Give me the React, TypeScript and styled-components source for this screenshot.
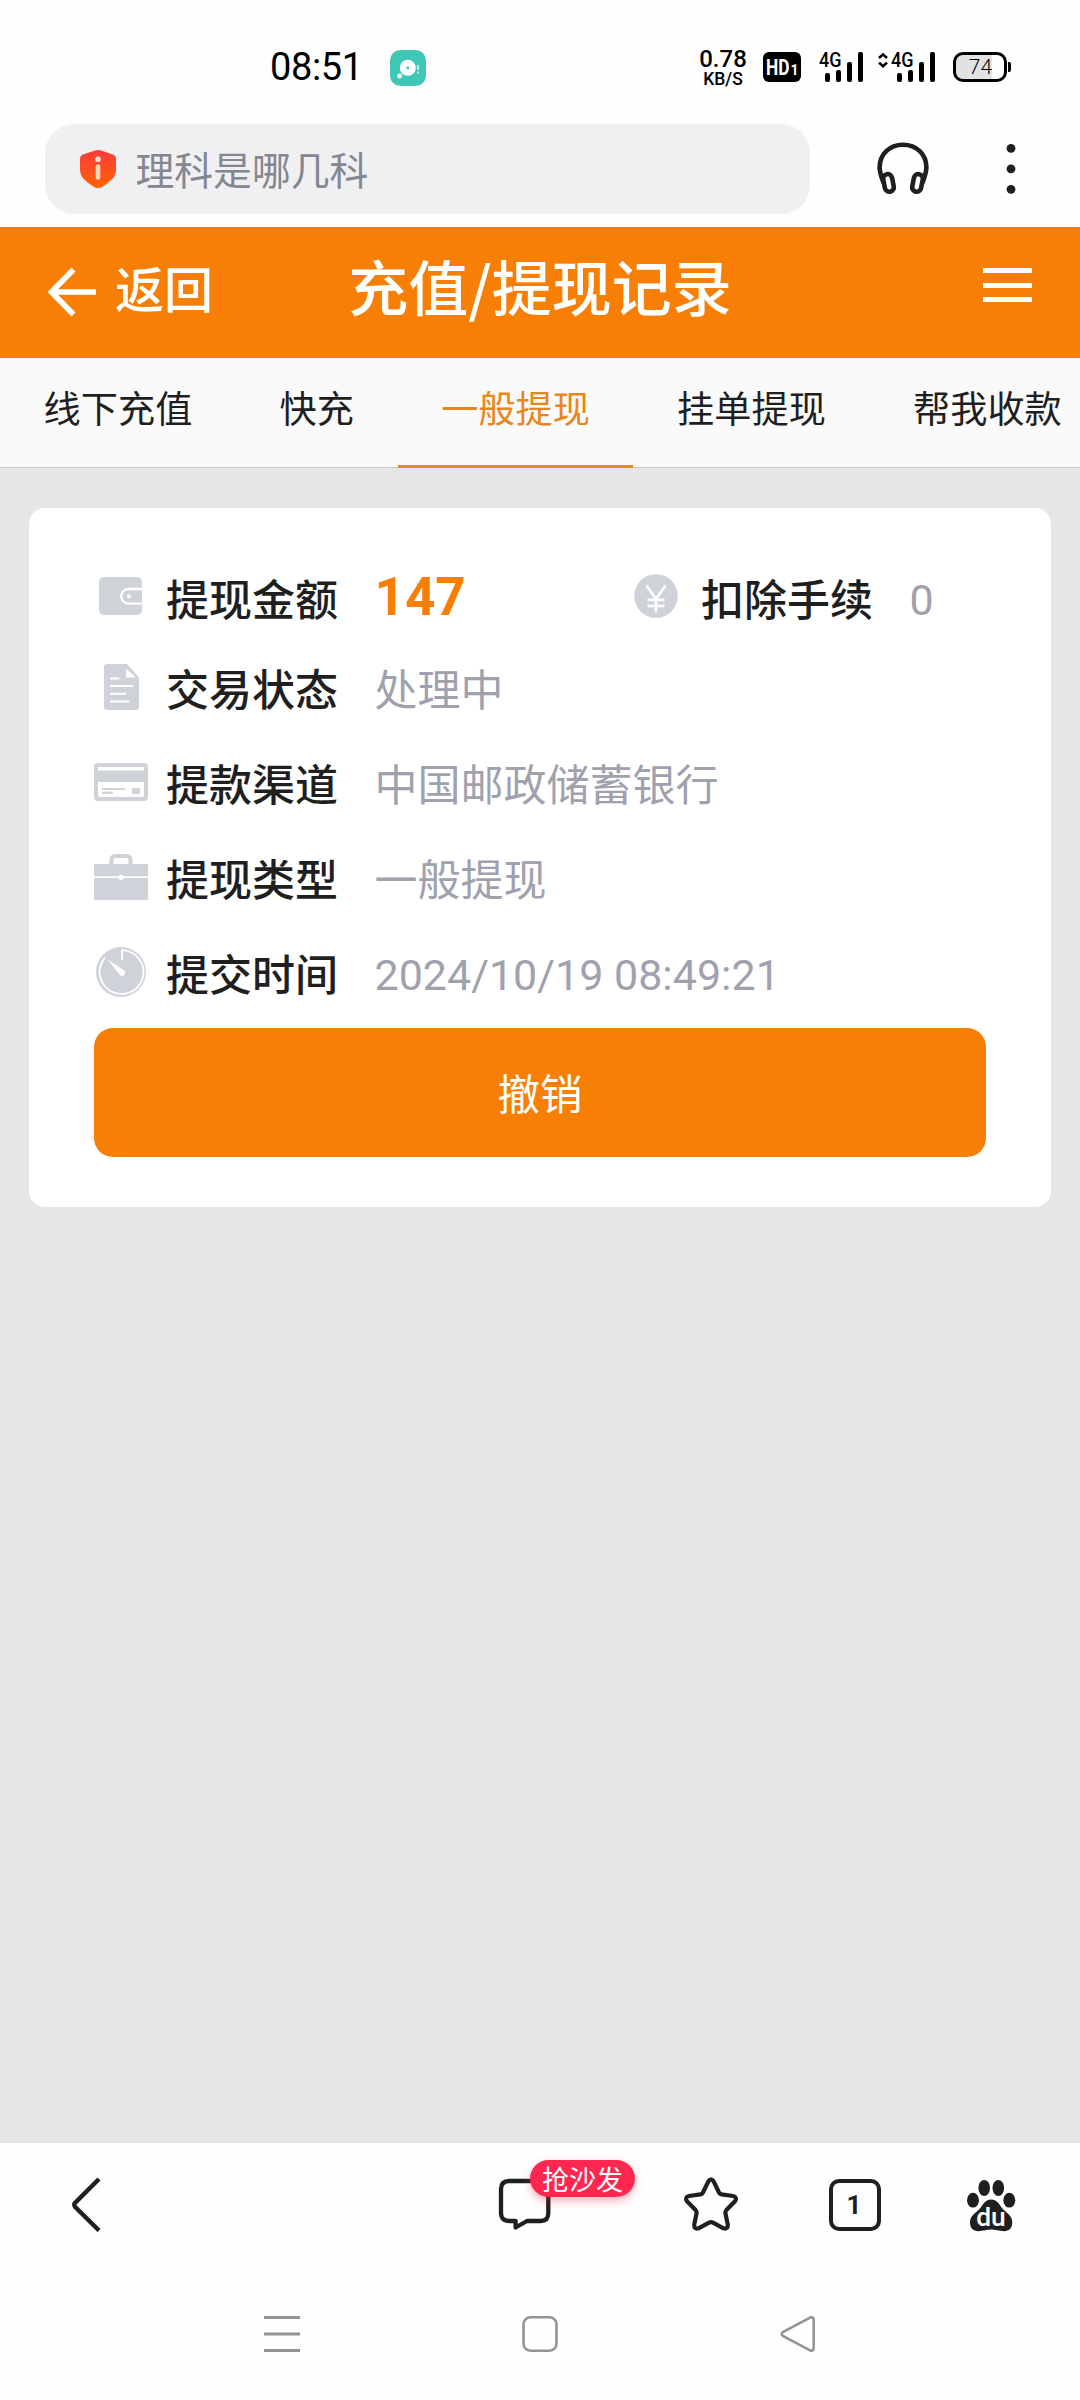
import React from "react";
import styled, { createGlobalStyle } from "styled-components";

const cjk = `"Noto Sans CJK SC", sans-serif`;
const latin = `Roboto, "Noto Sans CJK SC", sans-serif`;
const orange = "#f77f05";
const ink = "#1f1f1f";
const muted = "#9fa2ae";
const glyph = "#d0d2da";

const GlobalStyle = createGlobalStyle`
  * { box-sizing: border-box; }
  body { margin: 0; background: #fff; font-family: ${cjk}; }
  svg { display: block; flex: none; }
`;

const Screen = styled.div`
  width: 1080px;
  height: 2400px;
  display: flex;
  flex-direction: column;
  overflow: hidden;
  background: #fefefe;
`;

/* ---------- status bar ---------- */
const StatusBar = styled.header`
  height: 110px;
  padding: 50px 69px 0 270px;
  display: flex;
  align-items: flex-start;
  color: #000;
  font-family: ${latin};
`;
const Clock = styled.div`
  width: 120px;
  font-size: 38px;
  line-height: 34px;
  letter-spacing: -0.4px;
`;
const StatusGroup = styled.div`
  margin-left: auto;
  display: flex;
  align-items: flex-start;
`;
const Speed = styled.div`
  width: 50px;
  margin-right: 15px;
  text-align: center;
  font-weight: 500;
`;
const SpeedValue = styled.div`
  font-size: 24px;
  line-height: 18px;
`;
const SpeedUnit = styled.div`
  margin-top: 3px;
  font-size: 17.5px;
  line-height: 16px;
`;
const HdBadge = styled.svg`
  margin: 2px 18px 0 0;
  font-family: ${latin};
  font-weight: 700;
`;
const Signal = styled.svg<{ $gap: number }>`
  margin: -6px ${(p) => p.$gap}px 0 0;
  font-family: ${latin};
`;
const Battery = styled.div`
  display: flex;
  align-items: center;
  margin-top: 2px;
`;
const BatteryBody = styled.div`
  width: 54px;
  height: 30px;
  border: 3px solid #000;
  border-radius: 10px;
  background: linear-gradient(90deg, #e2e2e2 36px, #fefefe 36px);
  font-size: 21px;
  font-weight: 300;
  line-height: 25px;
  text-align: center;
  padding-left: 1px;
`;
const BatteryCap = styled.div`
  width: 3px;
  height: 10px;
  margin-left: 1px;
  border-radius: 0 2px 2px 0;
  background: #000;
`;

/* ---------- browser bar ---------- */
const BrowserBar = styled.div`
  height: 117px;
  padding: 14px 0 0 45px;
  display: flex;
  align-items: flex-start;
`;
const SearchBox = styled.div`
  width: 765px;
  height: 90px;
  padding-left: 35px;
  border-radius: 29px;
  background: #f0f0f3;
  display: flex;
  align-items: center;
`;
const SearchText = styled.span`
  margin: 0 0 2px 19.5px;
  font-size: 38.8px;
  line-height: 48px;
  color: #84878f;
`;
const BarIcon = styled.div<{ $left: number; $top: number }>`
  margin: ${(p) => p.$top}px 0 0 ${(p) => p.$left}px;
`;

/* ---------- page header ---------- */
const PageHeader = styled.div`
  height: 131px;
  padding: 0 48px;
  background: ${orange};
  color: #fff;
  display: grid;
  grid-template-columns: 240px 1fr 240px;
  align-items: center;
`;
const BackButton = styled.div`
  display: flex;
  align-items: center;
  gap: 19px;
  margin-top: -1px;
  font-size: 49px;
  line-height: 60px;
  font-weight: 500;
`;
const BackLabel = styled.span`
  margin-top: -10px;
`;
const Title = styled.h1`
  margin: -16px 0 0;
  font-size: 60px;
  line-height: 80px;
  font-weight: 500;
  text-align: center;
  white-space: nowrap;
`;
const MenuButton = styled.div`
  justify-self: end;
  width: 49px;
  margin-top: -15px;
  display: flex;
  flex-direction: column;
  gap: 9.5px;
`;
const MenuLine = styled.span`
  height: 5px;
  background: #fff;
`;

/* ---------- tabs ---------- */
const Tabs = styled.nav`
  height: 110px;
  background: #fafafa;
  display: flex;
  border-bottom: 1px solid #c6cacb;
`;
const Tab = styled.div<{ $active?: boolean }>`
  flex: none;
  height: 110px;
  padding: 22px 43.6px 0;
  font-size: 37.2px;
  line-height: 54px;
  white-space: nowrap;
  color: ${(p) => (p.$active ? "#e8861a" : ink)};
  border-bottom: 3px solid ${(p) => (p.$active ? "#dc8a2c" : "transparent")};
`;

/* ---------- record card ---------- */
const Body = styled.main`
  flex: 1;
  padding: 40px 29px 0;
  background: #e6e6e6;
`;
const Card = styled.section`
  height: 699px;
  padding: 43.5px 65px 0;
  border-radius: 16px;
  background: #fff;
`;
const Row = styled.div<{ $height: number }>`
  height: ${(p) => p.$height}px;
  display: flex;
  align-items: center;
`;
const IconCell = styled.div`
  width: 54px;
  margin-right: 18px;
  display: flex;
  justify-content: center;
`;
const Label = styled.span<{ $drop?: number }>`
  width: 208.5px;
  padding-top: ${(p) => p.$drop ?? 0}px;
  font-size: 43px;
  line-height: 60px;
  font-weight: 500;
  color: ${ink};
`;
const Value = styled.span<{ $numeric?: boolean; $drop?: number }>`
  padding-top: ${(p) => p.$drop ?? 0}px;
  font-size: 43px;
  line-height: 60px;
  color: ${muted};
  font-family: ${(p) => (p.$numeric ? latin : cjk)};
`;
const Amount = styled.span`
  width: 254.5px;
  padding-top: 3px;
  font-family: ${latin};
  font-size: 53px;
  line-height: 60px;
  font-weight: 700;
  color: ${orange};
`;
const CancelButton = styled.button`
  width: 892px;
  height: 129px;
  margin-top: 8.5px;
  padding: 0 0 2px;
  border: 0;
  border-radius: 19px;
  background: ${orange};
  color: #fff;
  font-family: ${cjk};
  font-size: 42.5px;
  line-height: 60px;
`;

/* ---------- bottom bars ---------- */
const Toolbar = styled.footer`
  height: 125px;
  display: flex;
  align-items: flex-start;
  padding: 33px 0 0 70px;
`;
const ToolItem = styled.div<{ $left: number }>`
  position: relative;
  margin-left: ${(p) => p.$left}px;
`;
const Badge = styled.span`
  position: absolute;
  left: 32px;
  top: -16px;
  width: 105px;
  height: 37px;
  border-radius: 19px;
  background: #ff274f;
  box-shadow: 0 4px 8px rgba(255, 39, 79, 0.35);
  color: #fff;
  font-size: 27px;
  line-height: 37px;
  text-align: center;
  white-space: nowrap;
`;
const TabCount = styled.div`
  width: 52px;
  height: 52px;
  margin-top: 2.5px;
  border: 4.5px solid ${ink};
  border-radius: 10px;
  display: flex;
  align-items: center;
  justify-content: center;
  padding-right: 2px;
  color: ${ink};
  font-family: Roboto, sans-serif;
  font-weight: 700;
  font-size: 26px;
  line-height: 30px;
`;
const SystemNav = styled.div`
  height: 132px;
  padding: 47px 264px 0;
  display: flex;
  justify-content: space-between;
`;

const SignalIcon = ({ data, gap }: { data?: boolean; gap: number }) => {
  const o = data ? 13 : 0;
  return (
    <Signal $gap={gap} width={44 + o} height="40" viewBox={`0 -6 ${44 + o} 40`}>
      {data && (
        <g fill="none" stroke="#000" strokeWidth="2.6">
          <path d="M1 8 L5 4.4 L9 8" />
          <path d="M1 12.6 L5 16.2 L9 12.6" />
        </g>
      )}
      <text x={o} y="17" fontSize="20" fontWeight="500" textLength="22.5" lengthAdjust="spacingAndGlyphs">
        4G
      </text>
      <rect x={o + 6} y="23" width="5" height="9" rx="2" />
      <rect x={o + 17} y="20" width="5" height="12" rx="2" />
      <rect x={o + 28} y="12" width="5" height="20" rx="2" />
      <rect x={o + 39} y="2" width="5" height="30" rx="2" />
    </Signal>
  );
};

const AppIcon = () => (
  <svg width="36" height="36" viewBox="0 0 36 36">
    <rect width="36" height="36" rx="10.5" fill="#40c8b6" />
    <circle cx="17.8" cy="17.8" r="8" fill="#fff" />
    <circle cx="17.8" cy="17.8" r="1.5" fill="#40c8b6" />
    <circle cx="9.6" cy="26" r="2.4" fill="#fff" />
    <path d="M28 15v5M28 21.5v2" stroke="#c9f0ea" strokeWidth="1.8" />
  </svg>
);

const ShieldIcon = () => (
  <svg width="36" height="40" viewBox="0 0 36 40">
    <defs>
      <linearGradient id="shield" x1="0" y1="0" x2="0" y2="1">
        <stop offset="0" stopColor="#fb3a3c" />
        <stop offset="1" stopColor="#fe6303" />
      </linearGradient>
    </defs>
    <path
      d="M15.8 1.3 Q18 .6 20.2 1.3 L33 5.6 Q36 6.8 36 10 V20 Q36 26 32.5 29.8 Q28 34.6 21.6 38.2 Q18 40 14.4 38.2 Q8 34.6 3.5 29.8 Q0 26 0 20 V10 Q0 6.8 3 5.6 Z"
      fill="url(#shield)"
    />
    <circle cx="18" cy="10.3" r="2.8" fill="#ffd9cc" />
    <path d="M18 17.5V28.5" stroke="#ffd3bd" strokeWidth="4.6" strokeLinecap="round" />
  </svg>
);

const HeadphonesIcon = () => (
  <svg width="54" height="54" viewBox="0 0 54 54" fill="none" stroke={ink} strokeWidth="4.6">
    <path d="M7.6 42 C5 35 3.6 31.5 3.6 26.5 C3.6 13 13.5 3.7 27 3.7 C40.5 3.7 50.4 13 50.4 26.5 C50.4 31.5 49 35 46.4 42" />
    <rect x="8" y="33" width="9" height="17.8" rx="4.5" transform="rotate(-11 12.5 42)" />
    <rect x="37" y="33" width="9" height="17.8" rx="4.5" transform="rotate(11 41.5 42)" />
  </svg>
);

const MoreIcon = () => (
  <svg width="10" height="52" viewBox="0 0 10 52" fill={ink}>
    <circle cx="5" cy="5.3" r="4.4" />
    <circle cx="5" cy="25.8" r="4.4" />
    <circle cx="5" cy="46.3" r="4.4" />
  </svg>
);

const WalletIcon = () => (
  <svg width="44" height="38" viewBox="0 0 44 38">
    <rect width="43" height="38" rx="5" fill={glyph} />
    <path d="M43 12H29.5a7.3 7.3 0 0 0 0 14.6H43" fill="none" stroke="#fff" strokeWidth="2.4" />
    <circle cx="30" cy="19.3" r="2" fill="#fff" />
  </svg>
);

const YenIcon = () => (
  <svg width="44" height="44" viewBox="0 0 44 44">
    <circle cx="22" cy="22" r="21.8" fill={glyph} />
    <path
      d="M12.5 11.5 L22 25 L31.5 11.5 M22 25 V38.5 M13.5 25.8 H30.5 M13.5 32 H30.5"
      fill="none"
      stroke="#fff"
      strokeWidth="2.7"
    />
  </svg>
);

const DocumentIcon = () => (
  <svg width="35" height="46" viewBox="0 0 35 46">
    <path d="M3 0H23L35 13.5V43a3 3 0 0 1-3 3H3a3 3 0 0 1-3-3V3a3 3 0 0 1 3-3Z" fill={glyph} />
    <path d="M22 4.5V13.5H31.5Z" fill="#fff" />
    <path d="M6 14.4H15.5M6 22H29M6 29.7H22M6 37.5H25.5" stroke="#fff" strokeWidth="2" />
  </svg>
);

const BankCardIcon = () => (
  <svg width="54" height="38" viewBox="0 0 54 38">
    <rect width="54" height="38" rx="4" fill={glyph} />
    <path d="M4 4H50V7.5H4ZM4 19H50V32a2 2 0 0 1-2 2H6a2 2 0 0 1-2-2Z" fill="#fff" />
    <path d="M8 26H31M8 29.8H19" stroke={glyph} strokeWidth="2" />
    <rect x="38" y="25" width="8" height="6" fill={glyph} />
  </svg>
);

const BriefcaseIcon = () => (
  <svg width="54" height="46" viewBox="0 0 54 46">
    <path d="M17.5 10.5V5.5a3.5 3.5 0 0 1 3.5-3.5H33a3.5 3.5 0 0 1 3.5 3.5V10.5" fill="none" stroke={glyph} strokeWidth="4" />
    <rect y="10" width="54" height="36" rx="1" fill={glyph} />
    <path d="M0 23.2H54" stroke="#fff" strokeWidth="1.8" />
    <circle cx="27" cy="23.3" r="2.6" fill="#fff" />
  </svg>
);

const TimerIcon = () => (
  <svg width="50" height="50" viewBox="0 0 50 50">
    <circle cx="25" cy="25" r="25" fill={glyph} />
    <path d="M9.2 10.5 A21.9 21.9 0 1 0 26 3.2 V13.5" fill="none" stroke="#fff" strokeWidth="1.8" />
    <path d="M11.8 12.6 L28.2 23.6 A2.9 2.9 0 0 1 23.6 27.8 Z" fill="#fff" />
  </svg>
);

const BackIcon = () => (
  <svg width="34" height="56" viewBox="0 0 34 56">
    <path d="M29 3 L5 26.9 Q3.6 28.8 5 30.7 L29 54.5" fill="none" stroke={ink} strokeWidth="4.4" />
  </svg>
);

const CommentIcon = () => (
  <svg width="54" height="56" viewBox="0 0 54 56">
    <path
      d="M11.5 5 H42.5 Q50.3 5 50.3 13 V37 Q50.3 45 42.5 45 H29 L17.6 51.5 V45 H11.5 Q3 45 3 37 V13 Q3 5 11.5 5 Z"
      fill="none"
      stroke={ink}
      strokeWidth="4.3"
      strokeLinejoin="round"
    />
  </svg>
);

const StarIcon = () => (
  <svg width="56" height="56" viewBox="0 0 56 56">
    <path
      d="M25.5 5.2 Q28 1.6 30.5 5.2 L36 16.5 Q36.8 18 38.6 18.4 L50 20 Q54.6 21.3 52 25.3 L43.4 34 Q42.2 35.4 42.4 37.2 L44.8 48.6 Q45 53.6 40.5 52.3 L30 46.6 Q28 45.6 26 46.6 L15.5 52.3 Q11 53.6 11.2 48.6 L13.6 37.2 Q13.8 35.4 12.6 34 L4 25.3 Q1.4 21.3 6 20 L17.4 18.4 Q19.2 18 20 16.5 Z"
      fill="none"
      stroke={ink}
      strokeWidth="4.2"
      strokeLinejoin="round"
    />
  </svg>
);

const PawIcon = () => (
  <svg width="50" height="56" viewBox="0 0 50 56" fill={ink}>
    <ellipse cx="18.2" cy="12" rx="5.8" ry="8" />
    <ellipse cx="32.3" cy="12" rx="5.8" ry="8" />
    <ellipse cx="7" cy="24.2" rx="6" ry="7.4" />
    <ellipse cx="43.3" cy="24.2" rx="6" ry="7.4" />
    <path d="M25.2 23.4 C31 23.4 33 28 36 32 C40 37 46.3 39 46.3 46.5 C46.3 52 43 55.2 38 55.2 C33 55.2 29 53.6 25.2 53.6 C21.4 53.6 17 55.2 12.4 55.2 C7.4 55.2 4 52 4 46.5 C4 39 10.4 37 14.4 32 C17.4 28 19.4 23.4 25.2 23.4 Z" />
    <text
      x="10.2"
      y="49.9"
      fontFamily="Roboto, sans-serif"
      fontWeight="500"
      fontSize="25"
      textLength="29.5"
      lengthAdjust="spacingAndGlyphs"
      fill="#fff"
    >
      du
    </text>
  </svg>
);

const details = [
  { icon: <DocumentIcon />, label: "交易状态", value: "处理中" },
  { icon: <BankCardIcon />, label: "提款渠道", value: "中国邮政储蓄银行" },
  { icon: <BriefcaseIcon />, label: "提现类型", value: "一般提现" },
  { icon: <TimerIcon />, label: "提交时间", value: "2024/10/19 08:49:21", numeric: true },
];

export default function App() {
  return (
    <Screen>
      <GlobalStyle />
      <StatusBar>
        <Clock>08:51</Clock>
        <AppIcon />
        <StatusGroup>
          <Speed>
            <SpeedValue>0.78</SpeedValue>
            <SpeedUnit>KB/S</SpeedUnit>
          </Speed>
          <HdBadge width="38" height="30" viewBox="0 0 38 30" fill="#fff">
            <rect width="38" height="30" rx="6" fill="#000" />
            <text x="3" y="23" fontSize="22" textLength="23.5" lengthAdjust="spacingAndGlyphs">
              HD
            </text>
            <text x="27.5" y="22.5" fontSize="14">
              1
            </text>
          </HdBadge>
          <SignalIcon gap={15} />
          <SignalIcon data gap={18} />
          <Battery>
            <BatteryBody>74</BatteryBody>
            <BatteryCap />
          </Battery>
        </StatusGroup>
      </StatusBar>

      <BrowserBar>
        <SearchBox>
          <ShieldIcon />
          <SearchText>理科是哪几科</SearchText>
        </SearchBox>
        <BarIcon $left={66} $top={17}>
          <HeadphonesIcon />
        </BarIcon>
        <BarIcon $left={76} $top={19}>
          <MoreIcon />
        </BarIcon>
      </BrowserBar>

      <PageHeader>
        <BackButton>
          <svg width="48" height="50" viewBox="0 0 48 50" fill="none" stroke="#fff" strokeWidth="5.6">
            <path d="M25.5 2.5 L3.5 25 L25.5 47.5 M4 25 H48" />
          </svg>
          <BackLabel>返回</BackLabel>
        </BackButton>
        <Title>充值/提现记录</Title>
        <MenuButton>
          <MenuLine />
          <MenuLine />
          <MenuLine />
        </MenuButton>
      </PageHeader>

      <Tabs>
        <Tab>线下充值</Tab>
        <Tab>快充</Tab>
        <Tab $active>一般提现</Tab>
        <Tab>挂单提现</Tab>
        <Tab>帮我收款</Tab>
      </Tabs>

      <Body>
        <Card>
          <Row $height={88}>
            <IconCell>
              <WalletIcon />
            </IconCell>
            <Label $drop={3}>提现金额</Label>
            <Amount>147</Amount>
            <IconCell>
              <YenIcon />
            </IconCell>
            <Label $drop={3}>扣除手续</Label>
            <Value $numeric $drop={9}>
              0
            </Value>
          </Row>
          {details.map((d) => (
            <Row key={d.label} $height={95}>
              <IconCell>{d.icon}</IconCell>
              <Label>{d.label}</Label>
              <Value $numeric={d.numeric} $drop={d.numeric ? 6 : 0}>
                {d.value}
              </Value>
            </Row>
          ))}
          <CancelButton>撤销</CancelButton>
        </Card>
      </Body>

      <Toolbar>
        <ToolItem $left={0}>
          <BackIcon />
        </ToolItem>
        <ToolItem $left={394}>
          <CommentIcon />
          <Badge>抢沙发</Badge>
        </ToolItem>
        <ToolItem $left={131}>
          <StarIcon />
        </ToolItem>
        <ToolItem $left={90}>
          <TabCount>1</TabCount>
        </ToolItem>
        <ToolItem $left={85}>
          <PawIcon />
        </ToolItem>
      </Toolbar>

      <SystemNav>
        <svg width="36" height="38" viewBox="0 0 36 38" stroke="#949494" strokeWidth="3">
          <path d="M0 2.5H36M0 19H36M0 35.5H36" />
        </svg>
        <svg width="36" height="38" viewBox="0 0 36 38" fill="none" stroke="#949494" strokeWidth="2.6">
          <rect x="1.5" y="2.3" width="33" height="33.4" rx="7" />
        </svg>
        <svg width="36" height="38" viewBox="0 0 36 38" fill="none" stroke="#949494" strokeWidth="2.6">
          <path d="M2.8 17.2 L30 2.6 Q33.7 1.6 33.7 5 V33 Q33.7 36.4 30 35.4 L2.8 20.8 Q.6 19 2.8 17.2 Z" />
        </svg>
      </SystemNav>
    </Screen>
  );
}
